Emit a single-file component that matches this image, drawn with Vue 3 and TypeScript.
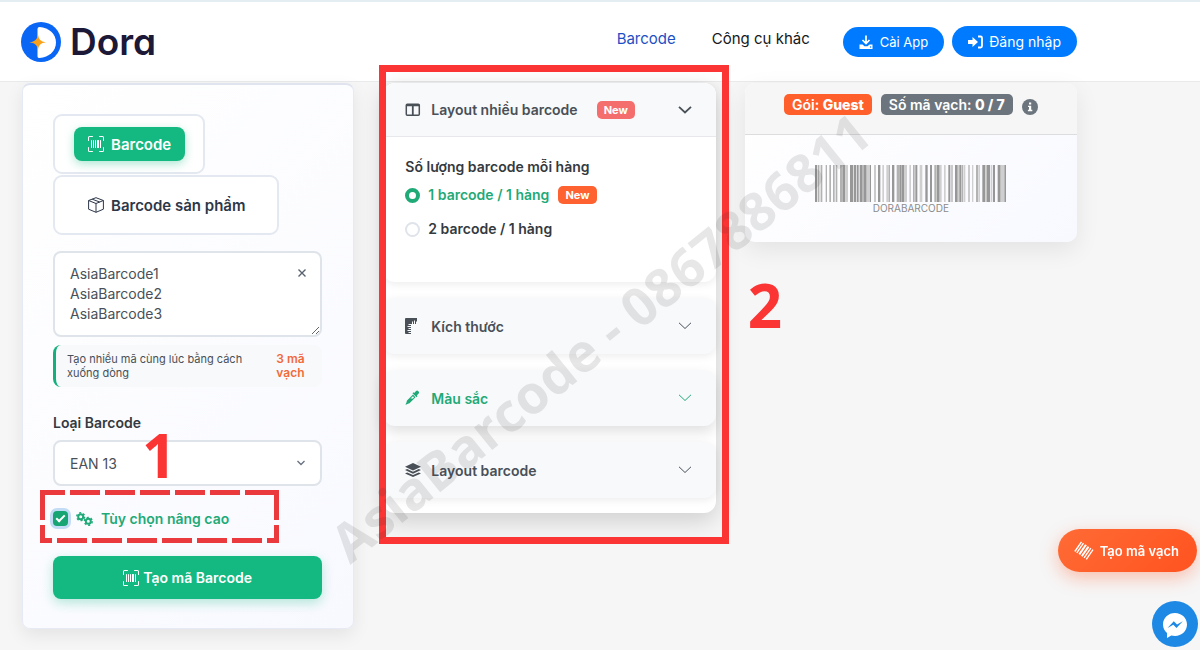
<script setup lang="ts">
import { ref } from 'vue'

interface Panel {
  id: string
  title: string
  icon: 'ruler' | 'dropper' | 'layers'
  active: boolean
}

const codes = ref('AsiaBarcode1\nAsiaBarcode2\nAsiaBarcode3')
const barcodeType = ref('EAN 13')
const advanced = ref(true)
const perRow = ref(1)

const panels: Panel[] = [
  { id: 'size', title: 'Kích thước', icon: 'ruler', active: false },
  { id: 'color', title: 'Màu sắc', icon: 'dropper', active: true },
  { id: 'layout', title: 'Layout barcode', icon: 'layers', active: false },
]

const dark = '#979797'
const mid = '#b2b2b2'
const light = '#cfcfcf'

// x, width and shade of each bar
const bars: [number, number, string][] = [
  [0, 6, dark], [8, 5, mid], [14, 3, light], [18, 4, mid], [32, 4, mid], [43, 5, mid],
  [54, 5, mid], [62, 5, mid], [75, 8, mid], [83, 8, dark], [91, 8, light],
  [105, 10, dark], [117, 6, dark], [125, 6, dark], [134, 9, dark], [145, 10, dark], [155, 10, light], [165, 3, dark],
  [178, 4, mid], [189, 7, dark], [202, 5, light], [214, 8, light], [222, 3, mid], [231, 7, dark],
  [245, 7, mid], [253, 5, dark], [259, 8, dark], [267, 9, light], [283, 5, light], [294, 5, mid], [301, 6, dark],
  [314, 8, light], [331, 7, dark], [345, 6, dark], [358, 7, mid], [366, 8, dark], [374, 6, light],
  [387, 5, light], [400, 6, dark], [409, 4, mid], [420, 8, dark], [429, 4, light], [433, 6, dark], [440, 5, mid], [447, 4, light],
  [460, 4, mid], [471, 4, light], [483, 7, mid], [491, 4, light], [502, 9, dark], [511, 4, light], [515, 10, dark], [527, 5, light], [534, 6, dark],
  [548, 9, dark], [557, 10, light], [568, 5, dark],
]
</script>

<template>
  <div class="page">
    <header class="header">
      <a class="logo" href="#" aria-label="Dora">
        <svg width="40" height="40" viewBox="0 0 40 40" aria-hidden="true">
          <circle cx="20" cy="20" r="20" fill="#0a66f5" />
          <path d="M16.500 25V34.500Q16.500 36 18.500 36C28 35.500 35 29 35 20.500S28 5.500 18.500 5Q16.500 5 16.500 7V15Z" fill="#fff" />
          <path d="M17 12.500C18 18 19.500 19.300 25 20.300C19.500 21.300 18 22.600 17 28C15.800 22.600 14.300 21.300 8.500 20.300C14.300 19.300 15.800 18 17 12.500Z" fill="#f9a11b" />
        </svg>
        <span class="logo-name">Dora</span>
      </a>
      <nav class="nav">
        <a class="nav-link current" href="#">Barcode</a>
        <a class="nav-link" href="#">Công cụ khác</a>
      </nav>
      <div class="header-actions">
        <button class="pill" type="button">
          <svg width="14" height="14" viewBox="0 0 14 14" fill="none" stroke="currentColor" aria-hidden="true">
            <path d="M7 0.500V8M3.500 5L7 8.500L10.500 5" stroke-width="1.700" />
            <path d="M0.500 9.500H3.500L5.500 11.300H8.500L10.500 9.500H13.500V14H0.500Z" fill="currentColor" stroke="none" />
            <circle cx="11.600" cy="12" r="0.700" fill="#007bff" stroke="none" />
          </svg>
          Cài App
        </button>
        <button class="pill large" type="button">
          <svg width="15" height="14" viewBox="0 0 15 14" aria-hidden="true">
            <path d="M0 5H4.500V2L10 7L4.500 12V9H0Z" fill="currentColor" />
            <path d="M10 1.500H12.500Q14 1.500 14 3V11Q14 12.500 12.500 12.500H10" fill="none" stroke="currentColor" stroke-width="1.800" />
          </svg>
          Đăng nhập
        </button>
      </div>
    </header>

    <main class="columns">
      <section class="card form">
        <div class="tabs">
          <div class="tab-box">
            <button class="tab selected" type="button">
              <svg width="16" height="16" viewBox="0 0 16 16" fill="currentColor" aria-hidden="true">
                <path d="M1.500 1a.5.5 0 0 0-.5.5v3a.5.5 0 0 1-1 0v-3A1.500 1.500 0 0 1 1.500 0h3a.5.5 0 0 1 0 1zM11 .5a.5.5 0 0 1 .5-.5h3A1.500 1.500 0 0 1 16 1.500v3a.5.5 0 0 1-1 0v-3a.5.5 0 0 0-.5-.5h-3a.5.5 0 0 1-.5-.5M.5 11a.5.5 0 0 1 .5.5v3a.5.5 0 0 0 .5.5h3a.5.5 0 0 1 0 1h-3A1.500 1.500 0 0 1 0 14.500v-3a.5.5 0 0 1 .5-.5m15 0a.5.5 0 0 1 .5.5v3a1.500 1.500 0 0 1-1.500 1.500h-3a.5.5 0 0 1 0-1h3a.5.5 0 0 0 .5-.5v-3a.5.5 0 0 1 .5-.5M3 4.500a.5.5 0 0 1 1 0v7a.5.5 0 0 1-1 0zm2 0a.5.5 0 0 1 1 0v7a.5.5 0 0 1-1 0zm2 0a.5.5 0 0 1 1 0v7a.5.5 0 0 1-1 0zm2 0a.5.5 0 0 1 .5-.5h1a.5.5 0 0 1 .5.5v7a.5.5 0 0 1-.5.5h-1a.5.5 0 0 1-.5-.5zm3 0a.5.5 0 0 1 1 0v7a.5.5 0 0 1-1 0z" />
              </svg>
              Barcode
            </button>
          </div>
          <div class="tab-box">
            <button class="tab" type="button">
              <svg width="16" height="16" viewBox="0 0 16 16" fill="none" stroke="currentColor" stroke-linejoin="round" aria-hidden="true">
                <path d="M8 0.700L15.400 3.500V12.200L8 15.300L0.600 12.200V3.500ZM0.600 3.500L8 6.500L15.400 3.500M8 6.500V15.300M4.200 2.200L11.700 5" />
              </svg>
              Barcode sản phẩm
            </button>
          </div>
        </div>

        <div class="codes">
          <textarea v-model="codes" class="codes-input" rows="3" aria-label="Barcode" spellcheck="false"></textarea>
          <button class="clear" type="button" aria-label="Clear">
            <svg width="8" height="8" viewBox="0 0 8 8" fill="none" stroke="currentColor" stroke-width="1.400" aria-hidden="true">
              <path d="M0.500 0.500L7.500 7.500M7.500 0.500L0.500 7.500" />
            </svg>
          </button>
        </div>
        <div class="hint">
          <span>Tạo nhiều mã cùng lúc bằng cách xuống dòng</span>
          <strong class="hint-count">3 mã vạch</strong>
        </div>

        <label class="field-label" for="barcode-type">Loại Barcode</label>
        <div class="select-wrap">
          <select id="barcode-type" v-model="barcodeType" class="select">
            <option>EAN 13</option>
          </select>
          <svg class="select-arrow" width="8" height="6" viewBox="0 0 8 6" fill="none" stroke="#667080" stroke-width="1.300" aria-hidden="true">
            <path d="M0.500 1L4 4.500L7.500 1" />
          </svg>
          <span class="mark mark-one">1</span>
        </div>

        <div class="advanced">
          <svg class="dashes" width="239" height="53" viewBox="0 0 239 53" fill="none" stroke="#ea3a3d" stroke-width="5" aria-hidden="true">
            <path d="M0 2.500H239" stroke-dasharray="25 5 30 5 30 5 30 5 30 5 30 5 34" />
            <path d="M0 50.500H239" stroke-dasharray="12 5 30 5 30 5 30 5 30 5 30 5 30 5 12" />
            <path d="M2.500 0V53M236.500 0V53" stroke-dasharray="30 5 18 0" />
          </svg>
          <label class="advanced-label">
            <input v-model="advanced" class="check" type="checkbox" />
            <svg class="gears" width="17" height="14" viewBox="0 0 17 14" fill="none" stroke="currentColor" aria-hidden="true">
              <circle cx="4.700" cy="4.700" r="2.500" stroke-width="2" />
              <circle cx="4.700" cy="4.700" r="3.900" stroke-width="1.500" stroke-dasharray="2.050 2.030" />
              <circle cx="12.300" cy="9.300" r="2.500" stroke-width="2" />
              <circle cx="12.300" cy="9.300" r="3.900" stroke-width="1.500" stroke-dasharray="2.050 2.030" />
            </svg>
            Tùy chọn nâng cao
          </label>
        </div>

        <button class="submit" type="button">
          <svg width="16" height="16" viewBox="0 0 16 16" fill="currentColor" aria-hidden="true">
            <path d="M1.500 1a.5.5 0 0 0-.5.5v3a.5.5 0 0 1-1 0v-3A1.500 1.500 0 0 1 1.500 0h3a.5.5 0 0 1 0 1zM11 .5a.5.5 0 0 1 .5-.5h3A1.500 1.500 0 0 1 16 1.500v3a.5.5 0 0 1-1 0v-3a.5.5 0 0 0-.5-.5h-3a.5.5 0 0 1-.5-.5M.5 11a.5.5 0 0 1 .5.5v3a.5.5 0 0 0 .5.5h3a.5.5 0 0 1 0 1h-3A1.500 1.500 0 0 1 0 14.500v-3a.5.5 0 0 1 .5-.5m15 0a.5.5 0 0 1 .5.5v3a1.500 1.500 0 0 1-1.500 1.500h-3a.5.5 0 0 1 0-1h3a.5.5 0 0 0 .5-.5v-3a.5.5 0 0 1 .5-.5M3 4.500a.5.5 0 0 1 1 0v7a.5.5 0 0 1-1 0zm2 0a.5.5 0 0 1 1 0v7a.5.5 0 0 1-1 0zm2 0a.5.5 0 0 1 1 0v7a.5.5 0 0 1-1 0zm2 0a.5.5 0 0 1 .5-.5h1a.5.5 0 0 1 .5.5v7a.5.5 0 0 1-.5.5h-1a.5.5 0 0 1-.5-.5zm3 0a.5.5 0 0 1 1 0v7a.5.5 0 0 1-1 0z" />
          </svg>
          Tạo mã Barcode
        </button>
      </section>

      <section class="card options">
        <div class="panel open">
          <button class="panel-head" type="button" aria-expanded="true">
            <svg class="panel-icon" width="16" height="16" viewBox="0 0 16 16" fill="none" stroke="currentColor" aria-hidden="true">
              <rect x="1.300" y="2.300" width="13" height="11" rx="1" stroke-width="1.500" />
              <path d="M1 3.300H14.500M7.800 3V13" stroke-width="1.800" />
            </svg>
            <span>Layout nhiều barcode</span>
            <span class="badge pink">New</span>
            <svg class="chevron" width="14" height="8" viewBox="0 0 14 8" fill="none" stroke="currentColor" stroke-width="1.800" aria-hidden="true">
              <path d="M1 0.800L7 6.500L13 0.800" />
            </svg>
          </button>
          <fieldset class="choices">
            <legend class="choices-title">Số lượng barcode mỗi hàng</legend>
            <label class="choice" :class="{ chosen: perRow === 1 }">
              <input v-model="perRow" class="radio" type="radio" name="per-row" :value="1" />
              1 barcode / 1 hàng
              <span class="badge orange">New</span>
            </label>
            <label class="choice" :class="{ chosen: perRow === 2 }">
              <input v-model="perRow" class="radio" type="radio" name="per-row" :value="2" />
              2 barcode / 1 hàng
            </label>
          </fieldset>
        </div>

        <div v-for="panel in panels" :key="panel.id" class="panel" :class="{ active: panel.active }">
          <button class="panel-head" type="button" aria-expanded="false">
            <svg class="panel-icon" width="16" height="16" viewBox="0 0 16 16" aria-hidden="true">
              <template v-if="panel.icon === 'ruler'">
                <path d="M1 0H12V6H6V16H1Q0 16 0 15V1Q0 0 1 0Z" fill="currentColor" />
                <path d="M3.500 6.500H6M2.500 8.500H6M3.500 10.500H6M2.500 12.500H6M3.500 14.500H6M7.500 3.500V6M9.500 2.500V6M11.500 3.500V6" stroke="#f8f9fb" />
              </template>
              <template v-else-if="panel.icon === 'dropper'">
                <path d="M13.400 1.200A1.800 1.800 0 0 0 10.800 1.200L9.200 2.900L8.500 2.200L7.500 3.200L11.500 7.200L12.500 6.200L11.800 5.500L13.400 3.800A1.800 1.800 0 0 0 13.400 1.200Z" fill="currentColor" />
                <path d="M8 4.500L2 10.500L1.300 13L0.500 14.200L1 14.700L2.300 13.900L4.500 13.200L10.500 7.200Z" fill="currentColor" />
                <path d="M7.900 6.200L5.500 8.600H8L9 7.300Z" fill="#f8f9fb" />
              </template>
              <path v-else d="M8 1L16 4.700L8 8.400L0 4.700ZM2.200 7.100L8 9.800L13.800 7.100L16 8.100L8 11.800L0 8.100ZM2.200 10.500L8 13L13.800 10.500L16 11.400L8 15L0 11.400Z" fill="currentColor" />
            </svg>
            <span>{{ panel.title }}</span>
            <svg class="chevron" width="14" height="8" viewBox="0 0 14 8" fill="none" stroke="currentColor" aria-hidden="true">
              <path d="M1 0.800L7 6.500L13 0.800" />
            </svg>
          </button>
        </div>

        <div class="frame"></div>
      </section>

      <section class="card preview">
        <div class="status">
          <span class="tag plan">Gói: <b>Guest</b></span>
          <span class="tag count">Số mã vạch: <b>0 / 7</b></span>
          <button class="info" type="button" aria-label="Info">
            <svg width="16" height="16" viewBox="0 0 16 16" aria-hidden="true">
              <circle cx="8" cy="8" r="8" fill="#6c757d" />
              <path d="M7 3.500H9.200V5.500H7ZM6 6.700H9.200V10.800H10.300V12.200H5.900V10.800H7V8H6Z" fill="#fff" />
            </svg>
          </button>
        </div>
        <figure class="sample">
          <svg class="bars" viewBox="0 0 573 110" preserveAspectRatio="none" aria-hidden="true">
            <rect v-for="[x, w, shade] in bars" :key="x" :x="x" y="0" :width="w" height="110" :fill="shade" />
          </svg>
          <figcaption>DORABARCODE</figcaption>
        </figure>
        <span class="mark mark-two">2</span>
      </section>

      <span class="watermark">AsiaBarcode - 0867886811</span>
    </main>

    <button class="create" type="button">
      <svg width="20" height="20" viewBox="0 0 20 20" fill="none" stroke="currentColor" aria-hidden="true">
        <path d="M7.500 0.800L0.800 10.500M9.500 2.200L2.800 11.900" stroke-width="1.400" />
        <path d="M12 3.700L5.300 13.400M14.500 5.600L7.800 15.300" stroke-width="2" />
        <path d="M16.800 7.200L10.100 16.900M19 8.700L12.300 18.400" stroke-width="1.400" />
      </svg>
      Tạo mã vạch
    </button>
    <a class="messenger" href="#" aria-label="Messenger">
      <svg width="46" height="46" viewBox="0 0 46 46" aria-hidden="true">
        <circle cx="23" cy="23" r="23" fill="#1e88e5" />
        <path d="M23 12C16.300 12 11 16.900 11 23.500C11 27 12.500 30 15 32V37L19.300 34.600C20.500 34.900 21.700 35 23 35C29.700 35 35 30 35 23.500S29.700 12 23 12Z" fill="#fff" />
        <path d="M15.500 27L21.800 20.300L25 23.500L30.800 20.300L24.500 27L21.300 23.800Z" fill="#1e88e5" />
      </svg>
    </a>
  </div>
</template>

<style>
body {
  margin: 0;
  background: #f6f6f6;
}
</style>

<style scoped>
.page {
  min-height: 100vh;
  overflow: hidden;
  font-family: Inter, "Liberation Sans", sans-serif;
  font-size: 14px;
  color: #343a40;
  background: #f6f6f6;
}

.page *,
.page *::before,
.page *::after {
  box-sizing: border-box;
}

button,
select,
textarea {
  font: inherit;
  color: inherit;
}

button {
  padding: 0;
  border: 0;
  background: none;
  cursor: pointer;
}

a {
  color: inherit;
  text-decoration: none;
}

svg {
  flex: none;
}

.header {
  display: flex;
  align-items: center;
  height: 82px;
  padding: 0 123px 0 21px;
  border-top: 2px solid #e3edf2;
  border-bottom: 1px solid #e9eaec;
  background: #fff;
}

.logo {
  display: flex;
  align-items: center;
  gap: 9px;
}

.logo-name {
  font-size: 37px;
  font-weight: 600;
  line-height: 40px;
  color: #1b1838;
  font-feature-settings: "cv11";
}

.nav {
  display: flex;
  gap: 36px;
  margin-left: auto;
  padding-bottom: 6px;
  font-size: 15px;
  color: #16181b;
}

.current {
  color: #1d4fc4;
}

.header-actions {
  display: flex;
  align-items: center;
  gap: 8px;
  margin-left: 33px;
}

.pill {
  display: flex;
  align-items: center;
  gap: 7px;
  height: 30px;
  padding: 0 16px;
  border-radius: 16px;
  background: #007bff;
  font-size: 13px;
  color: #fff;
}

.pill.large {
  gap: 6px;
  height: 31px;
  font-size: 14px;
}

.columns {
  position: relative;
  display: grid;
  grid-template-columns: repeat(3, minmax(0, 1fr));
  align-items: start;
  gap: 29px;
  padding: 1px 123px 20px 22px;
}

.card {
  position: relative;
  border-radius: 8px;
  background: #fff;
  box-shadow: 0 8px 24px rgba(0, 0, 0, 0.1);
}

.form {
  padding: 29px 31px 29px 30px;
  border: 1px solid #e6eaf4;
  border-top-color: #dfe4ee;
  border-top-width: 2px;
  background: linear-gradient(135deg, #fff, #f8f9ff);
  box-shadow: 0 6px 18px rgba(0, 0, 0, 0.08);
}

.tabs {
  display: flex;
  flex-direction: column;
  align-items: flex-start;
  gap: 1px;
}

.tab-box {
  padding: 11px 18px 11px 19px;
  border: 2px solid #e4e8f0;
  border-radius: 9px;
  background: #fff;
}

.tab {
  display: flex;
  align-items: center;
  gap: 7px;
  height: 34px;
  padding: 0 14px;
  border-radius: 8px;
  font-size: 15px;
  font-weight: 600;
  color: #2d3748;
}

.tab.selected {
  background: #14b881;
  color: #fff;
  box-shadow: 0 3px 10px rgba(20, 184, 129, 0.35);
}

.codes {
  position: relative;
  margin-top: 16px;
}

.codes-input {
  display: block;
  width: 100%;
  height: 86px;
  padding: 11px 40px 11px 15px;
  border: 2px solid #dfe3ea;
  border-radius: 8px;
  outline: 0;
  background: #fff;
  line-height: 20px;
  color: #495057;
  resize: vertical;
  overflow: hidden;
}

.clear {
  position: absolute;
  top: 12px;
  right: 10px;
  display: flex;
  align-items: center;
  justify-content: center;
  width: 20px;
  height: 20px;
  color: #596370;
}

.hint {
  display: flex;
  justify-content: space-between;
  gap: 24px;
  margin-top: 8px;
  padding: 7px 12px 7px 11px;
  border-left: 3px solid #14b07c;
  border-radius: 8px;
  background: #f8f9fb;
  font-size: 11px;
  line-height: 14px;
  color: #495057;
}

.hint-count {
  flex: none;
  width: 34px;
  font-size: 12px;
  font-weight: 600;
  color: #f26a3b;
}

.field-label {
  display: block;
  margin-top: 27px;
  font-weight: 600;
  line-height: 18px;
}

.select-wrap {
  position: relative;
  margin-top: 8px;
}

.select {
  display: block;
  width: 100%;
  height: 46px;
  padding: 0 40px 0 15px;
  border: 2px solid #dfe3ea;
  border-radius: 8px;
  outline: 0;
  background: #fff;
  color: #495057;
  appearance: none;
}

.select-arrow {
  position: absolute;
  top: 20px;
  right: 17px;
  pointer-events: none;
}

.mark {
  position: absolute;
  font-family: "Open Sans", "Noto Sans", sans-serif;
  font-size: 60px;
  font-weight: 700;
  line-height: 60px;
  color: #fb3434;
  pointer-events: none;
}

.mark-one {
  top: -15px;
  left: 89px;
}

.mark-two {
  top: 192px;
  left: 3px;
}

.advanced {
  position: relative;
  width: 239px;
  height: 53px;
  margin: 4px 0 0 -13px;
  display: flex;
  align-items: center;
}

.dashes {
  position: absolute;
  inset: 0;
  pointer-events: none;
}

.advanced-label {
  display: flex;
  align-items: center;
  padding: 4px 0 0 13px;
  font-weight: 600;
  line-height: 20px;
  color: #1faa78;
}

.check {
  display: grid;
  place-items: center;
  width: 15px;
  height: 15px;
  margin: 0 8px 0 0;
  border-radius: 4px;
  background: #17a673;
  box-shadow: 0 0 0 3px #c3dcf5;
  appearance: none;
}

.check:checked::before {
  content: "";
  width: 9px;
  height: 5px;
  margin-bottom: 3px;
  border: solid #fff;
  border-width: 0 0 2px 2px;
  transform: rotate(-45deg);
}

.gears {
  margin-right: 8px;
}

.submit {
  display: flex;
  align-items: center;
  justify-content: center;
  gap: 4px;
  width: 100%;
  height: 43px;
  margin-top: 13px;
  border-radius: 8px;
  background: #14b881;
  font-weight: 600;
  color: #fff;
  box-shadow: 0 4px 12px rgba(20, 184, 129, 0.3);
}

.options {
  display: flex;
  flex-direction: column;
  gap: 16px;
  padding-bottom: 15px;
  border-radius: 12px;
  box-shadow: 0 8px 24px rgba(0, 0, 0, 0.16);
}

.panel {
  border-radius: 12px;
  background: #f8f9fb;
  box-shadow: 0 2px 8px rgba(0, 0, 0, 0.08);
}

.panel.open {
  background: #fff;
}

.panel.active {
  color: #1faa78;
  box-shadow: 0 6px 14px rgba(0, 0, 0, 0.12);
}

.panel-head {
  display: flex;
  align-items: center;
  width: 100%;
  height: 56px;
  padding: 0 24px 0 22px;
  border-radius: 12px;
  font-weight: 600;
  color: #495057;
}

.active .panel-head {
  color: #1faa78;
}

.open .panel-head {
  height: 54px;
  border-bottom: 1px solid #e6e8eb;
  border-radius: 12px 12px 0 0;
  background: #f8f9fb;
}

.panel-icon {
  margin-right: 10px;
}

.chevron {
  margin-left: auto;
}

.badge {
  padding: 0 7px;
  border-radius: 5px;
  font-size: 11px;
  font-weight: 700;
  line-height: 18px;
  color: #fff;
}

.pink {
  margin-left: 19px;
  background: #f56e6e;
}

.orange {
  margin-left: 9px;
  background: #fd6230;
}

.choices {
  display: flex;
  flex-direction: column;
  margin: 0;
  padding: 9px 22px 43px;
  border: 0;
}

.choices-title {
  float: left;
  margin-bottom: 8px;
  padding: 11px 0 0;
  font-weight: 600;
  line-height: 20px;
}

.choice {
  display: flex;
  align-items: center;
  font-weight: 600;
  line-height: 20px;
}

.choice + .choice {
  margin-top: 14px;
}

.chosen {
  color: #1faa78;
}

.radio {
  width: 15px;
  height: 15px;
  margin: 0 8px 0 0;
  border: 2px solid #dfe3ea;
  border-radius: 50%;
  background: #fff;
  appearance: none;
}

.radio:checked {
  border: 4px solid #1faa78;
}

.frame {
  position: absolute;
  inset: -18px -13px -31px -4px;
  border: 7px solid #fb3434;
  pointer-events: none;
}

.preview {
  border-radius: 10px;
  background: linear-gradient(135deg, #fff, #f8f9ff);
  box-shadow: 0 8px 24px rgba(0, 0, 0, 0.08);
}

.status {
  display: flex;
  align-items: flex-start;
  justify-content: center;
  gap: 9px;
  padding: 11px 0 19px;
  border-bottom: 1px solid #dcdddf;
  border-radius: 10px 10px 0 0;
  background: #f6f6f6;
}

.tag {
  padding: 0 8px;
  border-radius: 5px;
  font-weight: 600;
  line-height: 21px;
  color: #fff;
}

.tag b {
  font-weight: 800;
}

.plan {
  background: #ff5f2b;
}

.count {
  background: #6c757d;
}

.info {
  display: flex;
  margin-top: 5px;
}

.sample {
  display: flex;
  flex-direction: column;
  align-items: center;
  margin: 0;
  padding: 30px 0 28px;
}

.bars {
  width: 191px;
  height: 37px;
}

figcaption {
  font-size: 10px;
  line-height: 12px;
  color: #8b8b8b;
}

.watermark {
  position: absolute;
  top: 255px;
  left: 600px;
  font-family: "Open Sans", "Noto Sans", sans-serif;
  font-size: 53px;
  font-weight: 700;
  line-height: 60px;
  white-space: nowrap;
  color: rgba(60, 60, 60, 0.12);
  transform: translate(-50%, -50%) rotate(-39deg);
  pointer-events: none;
}

.create {
  position: fixed;
  right: 3px;
  bottom: 78px;
  display: flex;
  align-items: center;
  gap: 6px;
  height: 43px;
  padding: 0 18px 0 16px;
  border-radius: 22px;
  background: linear-gradient(135deg, #ff6b35, #ff5320);
  font-size: 13px;
  font-weight: 600;
  color: #fff;
  box-shadow: 0 6px 18px rgba(255, 90, 40, 0.35);
}

.messenger {
  position: fixed;
  right: 2px;
  bottom: 3px;
  display: flex;
}
</style>
